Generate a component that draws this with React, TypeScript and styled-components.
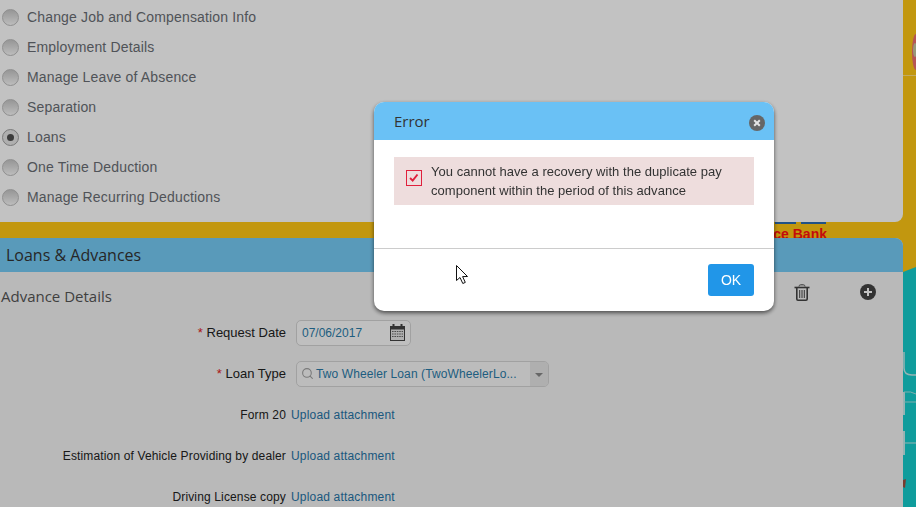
import React from "react";
import styled, { createGlobalStyle } from "styled-components";
import { Search } from "lucide-react";

const GlobalStyle = createGlobalStyle`
    html, body {
        margin: 0;
        padding: 0;
        overflow: hidden;
    }
    body {
        font-family: "Liberation Sans", Arial, sans-serif;
        background-color: #ffc715;
    }
`;

const options = [
    "Change Job and Compensation Info",
    "Employment Details",
    "Manage Leave of Absence",
    "Separation",
    "Loans",
    "One Time Deduction",
    "Manage Recurring Deductions",
];

const attachments = [
    "Form 20",
    "Estimation of Vehicle Providing by dealer",
    "Driving License copy",
];

const TrashIcon = () => (
    <svg width="16" height="17" viewBox="0 0 16 17">
        <path d="M5 2.5 C5 1 6 0.8 8 0.8 C10 0.8 11 1 11 2.5" fill="none" stroke="#444" strokeWidth="1" />
        <path d="M0.5 3.5 H15.5" stroke="#444" strokeWidth="1.6" />
        <path d="M2.8 4 V15 Q2.8 16.2 4 16.2 H12 Q13.2 16.2 13.2 15 V4" fill="none" stroke="#444" strokeWidth="1.6" />
        <path d="M5.7 6 V14 M8 6 V14 M10.3 6 V14" stroke="#444" strokeWidth="1" />
    </svg>
);

const PlusIcon = () => (
    <svg width="16" height="16" viewBox="0 0 16 16">
        <circle cx="8" cy="8" r="8" fill="#444" />
        <path d="M8 4 V12 M4 8 H12" stroke="#fff" strokeWidth="2" />
    </svg>
);

const CalendarIcon = () => (
    <svg width="15" height="17" viewBox="0 0 15 17">
        <rect x="0.5" y="2.5" width="14" height="14" fill="#e8e8e8" stroke="#444" />
        <rect x="0" y="2" width="15" height="3.5" fill="#444" />
        <rect x="2.5" y="0" width="2" height="4" fill="#444" />
        <rect x="10.5" y="0" width="2" height="4" fill="#444" />
        <path d="M2 7.5 H13 M2 10 H13 M2 12.5 H13" stroke="#666" strokeWidth="1.2" strokeDasharray="1.6 0.8" />
    </svg>
);

const SideArt = () => (
    <svg width="13" height="507" viewBox="0 0 13 507">
        <ellipse cx="13" cy="52" rx="4" ry="18" fill="#f07070" />
        <ellipse cx="12" cy="50" rx="2" ry="7" fill="#c8c8a0" />
        <path d="M0 75.5 H13" stroke="#ffe080" strokeWidth="1" />
        <polygon points="0,272 13,267 13,507 0,507" fill="#15cdcd" />
        <path d="M1 352 V368 Q1 375 9 375 H13" fill="none" stroke="#c8ecec" strokeWidth="1.5" />
        <path d="M1 392 V415" stroke="#c8ecec" strokeWidth="2" />
        <path d="M1 402 H13 M1 392 Q8 391 13 394" fill="none" stroke="#a8e4e4" strokeWidth="1" />
        <path d="M1 431 V455" stroke="#c8ecec" strokeWidth="2" />
        <path d="M1 443 H13" stroke="#c8ecec" strokeWidth="1" />
        <polygon points="0,480 3,479 2,488 0,487" fill="#a05040" />
    </svg>
);

const App = () => {
    return (
        <>
            <GlobalStyle />
            <Page>
                <Main>
                    <ActionsCard>
                        {options.map((option) => (
                            <OptionRow key={option}>
                                <Radio $checked={option === "Loans"} />
                                <OptionLabel>{option}</OptionLabel>
                            </OptionRow>
                        ))}
                    </ActionsCard>
                    <Strip>
                        <BankLine $width={21} />
                        <BankLine $width={25} />
                        <BankName>ce Bank</BankName>
                    </Strip>
                    <LoansCard>
                        <CardHeader>Loans &amp; Advances</CardHeader>
                        <TitleRow>
                            <SectionTitle>Advance Details</SectionTitle>
                            <TitleActions>
                                <TrashIcon />
                                <PlusIcon />
                            </TitleActions>
                        </TitleRow>
                        <FormRow>
                            <RequiredLabel>
                                <Required>* </Required>Request Date
                            </RequiredLabel>
                            <DateInput>
                                07/06/2017
                                <CalendarIcon />
                            </DateInput>
                        </FormRow>
                        <FormRow>
                            <RequiredLabel>
                                <Required>* </Required>Loan Type
                            </RequiredLabel>
                            <SelectInput>
                                <Search size={13} color="#a0a0a0" />
                                <SelectValue>Two Wheeler Loan (TwoWheelerLo...</SelectValue>
                                <SelectArrow />
                            </SelectInput>
                        </FormRow>
                        {attachments.map((name) => (
                            <AttachmentRow key={name}>
                                <FieldLabel>{name}</FieldLabel>
                                <UploadLink>Upload attachment</UploadLink>
                            </AttachmentRow>
                        ))}
                    </LoansCard>
                </Main>
                <Side>
                    <SideArt />
                </Side>
            </Page>
            <Backdrop>
                <Modal>
                    <ModalHeader>
                        Error
                        <CloseButton viewBox="0 0 16 16">
                            <circle cx="8" cy="8" r="8" fill="#666" />
                            <path d="M5.2 5.2 L10.8 10.8 M10.8 5.2 L5.2 10.8" stroke="#e4e4e4" strokeWidth="2" />
                        </CloseButton>
                    </ModalHeader>
                    <ModalBody>
                        <Alert>
                            <AlertIcon viewBox="0 0 16 16">
                                <path d="M3.5 8 L6.5 11 L12 4" fill="none" stroke="#e0203c" strokeWidth="2.2" />
                            </AlertIcon>
                            <AlertText>
                                You cannot have a recovery with the duplicate pay component within the period of this advance
                            </AlertText>
                        </Alert>
                    </ModalBody>
                    <ModalFooter>
                        <OkButton>OK</OkButton>
                    </ModalFooter>
                    <Cursor viewBox="0 0 13 20">
                        <path d="M0.5 0.5 V15.5 L4 12.5 L6.8 18.5 L9.3 17.4 L6.6 11.6 L11.5 11.5 Z" fill="#fff" stroke="#111" strokeWidth="1" />
                    </Cursor>
                </Modal>
            </Backdrop>
        </>
    );
};

const Page = styled.div`
    display: flex;
    width: 916px;
    height: 507px;
    overflow: hidden;
`;

const Main = styled.div`
    width: 903px;
    flex-shrink: 0;
    display: flex;
    flex-direction: column;
`;

const Side = styled.div`
    flex: 1;
    line-height: 0;
`;

const ActionsCard = styled.div`
    height: 222px;
    padding-top: 2px;
    box-sizing: border-box;
    background-color: #fff;
    border-bottom-right-radius: 8px;
`;

const OptionRow = styled.div`
    display: flex;
    align-items: center;
    height: 30px;
    padding-left: 2px;
    gap: 8px;
`;

const Radio = styled.span<{ $checked?: boolean }>`
    position: relative;
    width: 17px;
    height: 17px;
    box-sizing: border-box;
    border-radius: 50%;
    border: 1px solid ${(props) => (props.$checked ? "#a0a0a0" : "#bcbcbc")};
    background: ${(props) =>
        props.$checked ? "#e6e6e6" : "linear-gradient(#c6c6c6, #f8f8f8)"};

    &::after {
        content: "";
        display: ${(props) => (props.$checked ? "block" : "none")};
        position: absolute;
        left: 4px;
        top: 4px;
        width: 7px;
        height: 7px;
        border-radius: 50%;
        background-color: #505050;
    }
`;

const OptionLabel = styled.span`
    font-size: 14px;
    letter-spacing: 0.16px;
    color: #6a6e74;
`;

const Strip = styled.div`
    position: relative;
    height: 16px;
    display: flex;
    justify-content: flex-end;
    gap: 5px;
    padding-right: 77px;
    overflow: hidden;
`;

const BankLine = styled.span<{ $width: number }>`
    width: ${(props) => props.$width}px;
    height: 2px;
    background-color: #2c6cb0;
`;

const BankName = styled.span`
    position: absolute;
    right: 76px;
    top: 5px;
    font-size: 14px;
    font-weight: bold;
    color: #ff1010;
    line-height: 14px;
`;

const LoansCard = styled.div`
    flex: 1;
    background-color: #f3f3f3;
    border-top-right-radius: 8px;
    overflow: hidden;
`;

const CardHeader = styled.div`
    height: 34px;
    line-height: 34px;
    padding-left: 6px;
    background-color: #76cbf5;
    font-family: "Open Sans", sans-serif;
    font-size: 16px;
    color: #333;
`;

const TitleRow = styled.div`
    display: flex;
    justify-content: space-between;
    align-items: center;
    height: 40px;
    padding: 0 27px 0 1px;
`;

const SectionTitle = styled.div`
    margin-top: 8px;
    font-family: "Open Sans", sans-serif;
    font-size: 15px;
    color: #555;
`;

const TitleActions = styled.div`
    display: flex;
    align-items: center;
    gap: 50px;
`;

const FormRow = styled.div`
    display: flex;
    align-items: center;
    height: 41px;
    gap: 10px;
`;

const AttachmentRow = styled.div`
    display: flex;
    align-items: center;
    height: 41px;
    gap: 5px;
`;

const FieldLabel = styled.div`
    width: 286px;
    text-align: right;
    font-size: 12px;
    letter-spacing: 0.14px;
    color: #222;
`;

const RequiredLabel = styled(FieldLabel)`
    font-size: 13px;
    letter-spacing: 0;
`;

const Required = styled.span`
    color: #e02020;
`;

const DateInput = styled.div`
    display: flex;
    align-items: center;
    justify-content: space-between;
    width: 115px;
    height: 26px;
    box-sizing: border-box;
    padding: 0 5px 0 5px;
    border: 1px solid #d4d4d4;
    border-radius: 5px;
    background-color: #fbfbfb;
    font-size: 12px;
    color: #2a7ba8;
`;

const SelectInput = styled.div`
    display: flex;
    align-items: center;
    width: 253px;
    height: 26px;
    box-sizing: border-box;
    padding-left: 4px;
    border: 1px solid #d4d4d4;
    border-radius: 5px;
    background-color: #f8f8f8;
    overflow: hidden;
`;

const SelectValue = styled.span`
    flex: 1;
    margin-left: 2px;
    font-size: 12px;
    letter-spacing: 0.1px;
    color: #2a7ba8;
`;

const SelectArrow = styled.span`
    position: relative;
    width: 18px;
    height: 100%;
    background-color: #e6e6e6;

    &::after {
        content: "";
        position: absolute;
        left: 5px;
        top: 11px;
        border-left: 4px solid transparent;
        border-right: 4px solid transparent;
        border-top: 4px solid #888;
    }
`;

const UploadLink = styled.span`
    font-size: 12px;
    letter-spacing: 0.18px;
    color: #2674a6;
`;

const Backdrop = styled.div`
    position: fixed;
    inset: 0;
    background-color: rgba(0, 0, 0, 0.24);
`;

const Modal = styled.div`
    position: absolute;
    left: 374px;
    top: 102px;
    width: 400px;
    height: 209px;
    display: flex;
    flex-direction: column;
    background-color: #fff;
    border-radius: 10px;
    box-shadow: 0 2px 4px rgba(0, 0, 0, 0.6);
    overflow: hidden;
`;

const ModalHeader = styled.div`
    position: relative;
    height: 38px;
    line-height: 39px;
    padding-left: 20px;
    background-color: #6ac1f5;
    font-family: "Open Sans", sans-serif;
    font-size: 15px;
    color: #333;
`;

const CloseButton = styled.svg`
    position: absolute;
    right: 9px;
    top: 13px;
    width: 16px;
    height: 16px;
`;

const ModalBody = styled.div`
    height: 109px;
    box-sizing: border-box;
    padding: 17px 20px 0;
    border-bottom: 1px solid #ccc;
`;

const Alert = styled.div`
    display: flex;
    align-items: center;
    height: 48px;
    padding-left: 12px;
    background-color: #eedddd;
`;

const AlertIcon = styled.svg`
    width: 14px;
    height: 14px;
    margin-bottom: 7px;
    flex-shrink: 0;
    border: 1px solid #e0203c;
`;

const AlertText = styled.div`
    margin-left: 9px;
    width: 310px;
    font-size: 13px;
    letter-spacing: 0.03px;
    line-height: 19px;
    color: #333;
`;

const ModalFooter = styled.div`
    flex: 1;
    display: flex;
    justify-content: flex-end;
    align-items: center;
    padding-right: 20px;
`;

const OkButton = styled.button`
    width: 46px;
    height: 32px;
    border: none;
    border-radius: 3px;
    background-color: #2196e8;
    color: #fff;
    font-family: "Liberation Sans", sans-serif;
    font-size: 14px;
`;

const Cursor = styled.svg`
    position: absolute;
    left: 82px;
    top: 163px;
    width: 13px;
    height: 20px;
`;

export default App;
